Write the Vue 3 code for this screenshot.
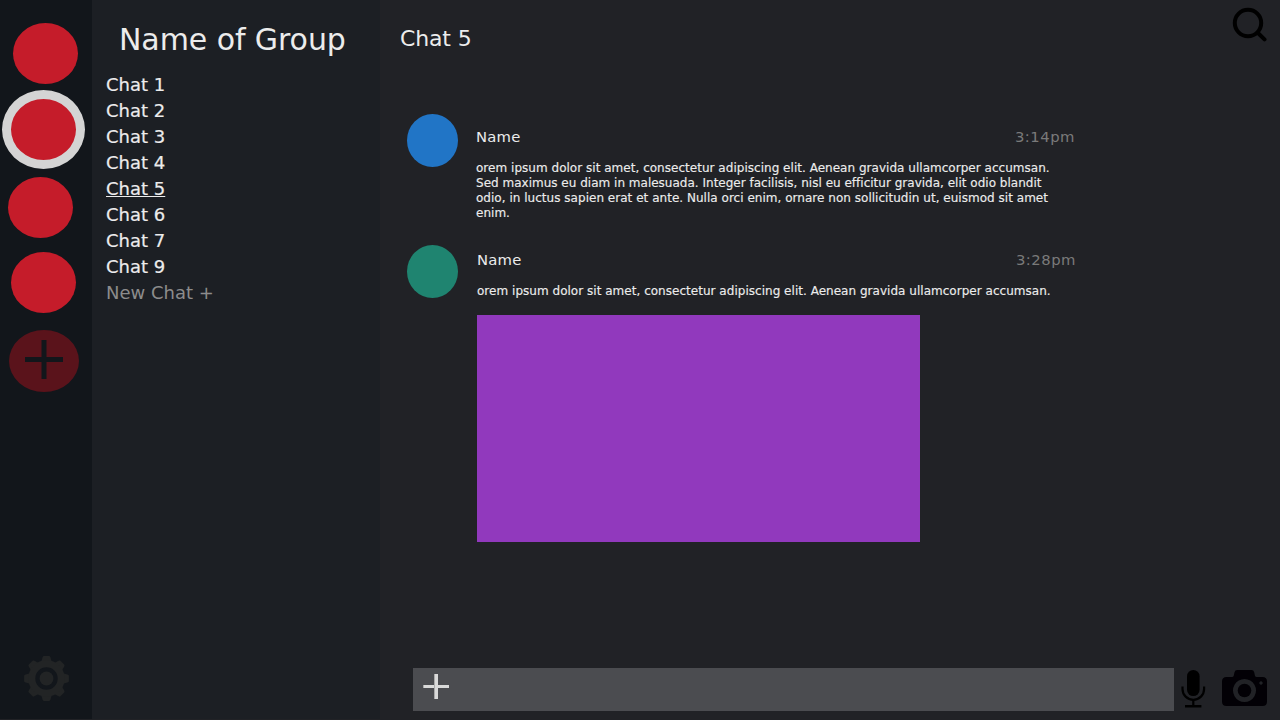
<script setup>
const groups = [
  { id: 1, cls: 'first' },
  { id: 2, cls: 'selected' },
  { id: 3, cls: 'third' },
  { id: 4, cls: 'fourth' },
]
const chats = [1, 2, 3, 4, 5, 6, 7, 9]
const activeChat = 5
const messages = [
  {
    name: 'Name',
    time: '3:14pm',
    color: 'blue',
    lines: [
      'orem ipsum dolor sit amet, consectetur adipiscing elit. Aenean gravida ullamcorper accumsan.',
      'Sed maximus eu diam in malesuada. Integer facilisis, nisl eu efficitur gravida, elit odio blandit',
      'odio, in luctus sapien erat et ante. Nulla orci enim, ornare non sollicitudin ut, euismod sit amet',
      'enim.',
    ],
  },
  {
    name: 'Name',
    time: '3:28pm',
    color: 'green',
    lines: ['orem ipsum dolor sit amet, consectetur adipiscing elit. Aenean gravida ullamcorper accumsan.'],
    picture: true,
  },
]
const teeth = [0, 45, 90, 135, 180, 225, 270, 315]
</script>

<template>
  <div class="app">
    <nav class="rail">
      <div v-for="g in groups" :key="g.id" class="group" :class="g.cls"></div>
      <div class="add-group">
        <svg width="70" height="62" viewBox="0 0 70 62">
          <path d="M16 27h38v5H16zM32.5 10h5v39h-5z" fill="#12161b" />
        </svg>
      </div>
      <svg class="gear" width="46" height="46" viewBox="-23.5 -22.5 46 46">
        <g fill="#222425">
          <path
            v-for="t in teeth"
            :key="t"
            :transform="`rotate(${t})`"
            d="M-5.8-15L-3.8-21.6Q-3.4-22.4-2.6-22.4H2.6Q3.4-22.4 3.8-21.6L5.8-15z"
          />
        </g>
        <circle r="14.7" fill="none" stroke="#222425" stroke-width="7" />
        <circle r="6.9" fill="#222425" />
      </svg>
    </nav>

    <aside class="sidebar">
      <h1>Name of Group</h1>
      <ul>
        <li v-for="c in chats" :key="c"><span :class="{ active: c === activeChat }">Chat {{ c }}</span></li>
        <li class="new">New Chat +</li>
      </ul>
    </aside>

    <main class="main">
      <header>
        <h2>Chat 5</h2>
        <svg class="search" width="36" height="36" viewBox="0 0 36 36" fill="none" stroke="#000">
          <circle cx="17" cy="16" r="13.2" stroke-width="4" />
          <path d="M27 26L33.5 32.4" stroke-width="4" stroke-linecap="round" />
        </svg>
      </header>

      <section class="messages">
        <article v-for="m in messages" :key="m.time" class="message" :class="m.color">
          <div class="avatar"></div>
          <div class="body">
            <div class="meta">
              <span class="name">{{ m.name }}</span>
              <span class="time">{{ m.time }}</span>
            </div>
            <p><span v-for="l in m.lines" :key="l">{{ l }}</span></p>
            <div v-if="m.picture" class="picture"></div>
          </div>
        </article>
      </section>

      <footer>
        <div class="composer">
          <svg width="28" height="28" viewBox="0 0 28 28">
            <path d="M1 12h26v3H1z" fill="#d9d9d9" />
            <path d="M12 1h4v25h-4z" fill="#d9d9d9" />
            <path d="M12 1h1v25h-1zM1 12h1v3H1z" fill="#aaa" />
          </svg>
        </div>
        <svg class="mic" width="26" height="40" viewBox="0 0 26 40">
          <rect x="6" y="1" width="12.6" height="26" rx="6.3" />
          <path d="M1.5 17.5V20a10.8 10.8 0 0 0 21.6 0v-2.5" fill="none" stroke="#000" stroke-width="2.2" />
          <path d="M11.2 30h2.2v6h7v2.6H4V36h7.2z" />
        </svg>
        <svg class="camera" width="45" height="36" viewBox="0 0 45 36">
          <path
            fill="#020005"
            fill-rule="evenodd"
            d="M4.5 7H10Q11.4 7 11.8 5.4L12.5 2.2Q13 0 15.2 0H29.5Q31.7 0 32.2 2.2L32.9 5.4Q33.3 7 34.7 7H40.5Q45 7 45 11.5V31.5Q45 36 40.5 36H4.5Q0 36 0 31.5V11.5Q0 7 4.5 7zM22.5 9a11.5 11.5 0 1 0 .01 0zM39 11.3a1.7 1.7 0 1 0 .01 0z"
          />
          <circle cx="22.5" cy="20.5" r="6.8" fill="#020005" />
        </svg>
      </footer>
    </main>
  </div>
</template>

<style>
body {
  background: #212226;
}
</style>

<style scoped>
.app {
  display: flex;
  width: 1280px;
  height: 720px;
  overflow: hidden;
  font-family: 'DejaVu Sans', sans-serif;
  color: #ececec;
  white-space: nowrap;
}
svg {
  display: block;
}
.rail {
  display: flex;
  flex-direction: column;
  box-sizing: border-box;
  width: 92px;
  height: 719px;
  padding-top: 23px;
  background: #12161b;
}
.group {
  flex: none;
  width: 65px;
  height: 61px;
  border-radius: 50%;
  background: #c51c2a;
}
.first {
  margin-left: 13px;
}
.selected {
  box-sizing: border-box;
  width: 83px;
  height: 79px;
  margin: 6px 0 8px 2px;
  border: 9px solid #d4d4d4;
}
.third {
  margin-left: 8px;
}
.fourth {
  margin: 14px 0 17px 11px;
}
.add-group {
  flex: none;
  width: 70px;
  height: 62px;
  margin-left: 9px;
  border-radius: 50%;
  background: #5a131b;
}
.gear {
  margin: auto 0 17px 23px;
}
.sidebar {
  width: 288px;
  height: 719px;
  background: #1c1f24;
}
h1,
h2,
p,
ul {
  margin: 0;
  padding: 0;
  font-weight: normal;
}
h1 {
  margin: 22px 0 15px 27px;
  font-size: 30px;
  line-height: 35px;
  letter-spacing: -0.08px;
}
ul {
  padding-left: 14px;
  list-style: none;
  font-size: 18px;
  line-height: 26px;
  -webkit-text-stroke: 0.2px;
}
.active {
  text-decoration: underline;
  text-decoration-thickness: 1px;
}
.new {
  color: #8c8c8c;
  -webkit-text-stroke: 0;
}
.main {
  display: flex;
  flex-direction: column;
  flex: 1;
  background: #212226;
}
header {
  display: flex;
  justify-content: space-between;
  height: 114px;
  padding: 0 13px 0 20px;
}
h2 {
  margin-top: 26px;
  font-size: 22px;
  line-height: 26px;
  letter-spacing: -0.15px;
}
.search {
  margin-top: 7px;
}
.messages {
  flex: 1;
  padding-left: 27px;
}
.message {
  display: flex;
  gap: 18px;
  height: 131px;
}
.avatar {
  flex: none;
  width: 51px;
  height: 53px;
  border-radius: 50%;
}
.blue .avatar {
  background: #2175c6;
}
.green .avatar {
  background: #1f8470;
}
.green {
  gap: 19px;
}
.body {
  width: 599px;
  padding-top: 14px;
}
.green .body {
  padding-top: 6px;
}
.meta {
  display: flex;
  justify-content: space-between;
  font-size: 14.8px;
  line-height: 18px;
  letter-spacing: 0.2px;
}
.time {
  color: #7a7a7a;
  letter-spacing: 0.5px;
}
p {
  margin-top: 15px;
  font-size: 12px;
  line-height: 15px;
  letter-spacing: 0.025px;
  -webkit-text-stroke: 0.15px;
}
p span {
  display: block;
}
p span:nth-child(2) {
  letter-spacing: 0.008px;
}
.picture {
  width: 443px;
  height: 227px;
  margin-top: 16px;
  background: #9139bd;
}
footer {
  display: flex;
  height: 52px;
  padding-left: 33px;
}
.composer {
  box-sizing: border-box;
  width: 761px;
  height: 43px;
  padding: 5px 9px;
  background: #4b4c50;
}
.mic {
  margin: 1px 0 0 7px;
}
.camera {
  margin: 1.5px 0 0 15px;
}
</style>
